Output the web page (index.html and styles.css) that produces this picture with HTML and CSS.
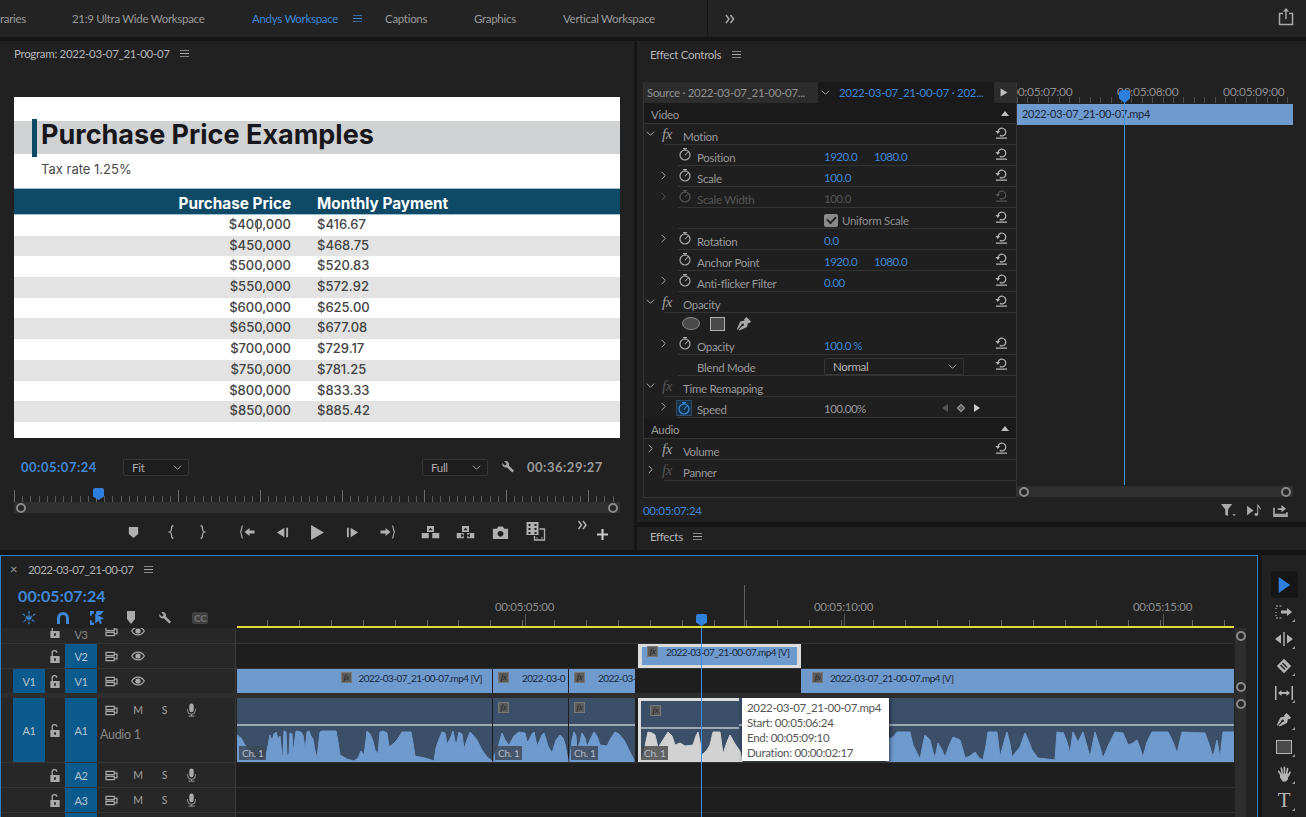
FILE: index.html
```html
<!DOCTYPE html>
<html lang="en">
<head>
  <meta charset="UTF-8" />
  <meta name="viewport" content="width=device-width, initial-scale=1.0"/>
  <title>Andys Workspace</title>
  <link rel="stylesheet" href="styles.css">
</head>
<body>
  <!-- icon sprite -->
  <svg class="sprite" xmlns="http://www.w3.org/2000/svg">
    <symbol id="i-menu" viewBox="0 0 10 10"><path d="M0 1h10v1H0zM0 4.500h10v1H0zM0 8h10v1H0z"/></symbol>
    <symbol id="i-down" viewBox="0 0 10 10"><path d="M1 3l4 4 4-4" fill="none" stroke="currentColor" stroke-width="1.100"/></symbol>
    <symbol id="i-right" viewBox="0 0 10 10"><path d="M3 1l4 4-4 4" fill="none" stroke="currentColor" stroke-width="1.100"/></symbol>
    <symbol id="i-reset" viewBox="0 0 14 14"><path d="M3.200 6.500a4.200 4.200 0 1 1 2 3.600" fill="none" stroke="currentColor" stroke-width="1.300"/><path d="M0.500 5.500h5l-2.500 3zM1 12.400h12v1.200H1z"/></symbol>
    <symbol id="i-watch" viewBox="0 0 14 14"><circle cx="7" cy="8" r="5" fill="none" stroke="currentColor" stroke-width="1.200"/><path d="M5 1h4v1.200H5zM6.500 2h1v2h-1zM6.600 8l3-3.200.6.500L7.400 8.600z"/></symbol>
    <symbol id="i-lock" viewBox="0 0 12 14"><path d="M1 6.500h10V14H1zM5 9v2.500h2V9z" fill-rule="evenodd"/><path d="M3 6.500V3.500a2.500 2.500 0 0 1 5-.5" fill="none" stroke="currentColor" stroke-width="1.400"/></symbol>
    <symbol id="i-output" viewBox="0 0 14 12"><path d="M1 1.500h9v3.500H1zM1 7h9v3.500H1zM10 3.500h3v5h-3" fill="none" stroke="currentColor" stroke-width="1.300"/></symbol>
    <symbol id="i-eye" viewBox="0 0 14 10"><path d="M.7 5c3-5.200 9.600-5.200 12.600 0-3 5.200-9.600 5.200-12.600 0z" fill="none" stroke="currentColor" stroke-width="1.200"/><circle cx="7" cy="5" r="2.600"/></symbol>
    <symbol id="i-mic" viewBox="0 0 12 16"><rect x="3.500" y="0.500" width="5" height="10" rx="2.500"/><path d="M1.500 7v1.500a4.500 4.500 0 0 0 9 0V7M6 13v1.800M2.500 15h7" fill="none" stroke="currentColor" stroke-width="1"/></symbol>
    <symbol id="i-marker" viewBox="0 0 12 14"><path d="M1 1h10v7.500L6 13 1 8.500z"/></symbol>
    <symbol id="i-in" viewBox="0 0 8 16"><path d="M6 1.500C4 1.500 4 3 4 5c0 2-.5 2.500-2 3 1.500.500 2 1 2 3 0 2 0 3.500 2 3.500" fill="none" stroke="currentColor" stroke-width="1.200"/></symbol>
    <symbol id="i-out" viewBox="0 0 8 16"><path d="M2 1.500C4 1.500 4 3 4 5c0 2 .5 2.500 2 3-1.500.500-2 1-2 3 0 2 0 3.500-2 3.500" fill="none" stroke="currentColor" stroke-width="1.200"/></symbol>
    <symbol id="i-goin" viewBox="0 0 16 16"><path d="M3 1.500C2 3 2.500 6 1 8c1.500 2 1 5 2 6.500" fill="none" stroke="currentColor" stroke-width="1.100"/><path d="M5 8l5-4v2.500h5v3h-5V12z"/></symbol>
    <symbol id="i-goout" viewBox="0 0 16 16"><path d="M13 1.500c1 1.500.500 4.500 2 6.500-1.500 2-1 5-2 6.500" fill="none" stroke="currentColor" stroke-width="1.100"/><path d="M11 8L6 4v2.500H1v3h5V12z"/></symbol>
    <symbol id="i-stepb" viewBox="0 0 14 14"><path d="M9 2v10L1 7zM11 2h2v10h-2z"/></symbol>
    <symbol id="i-stepf" viewBox="0 0 14 14"><path d="M5 2v10l8-5zM1 2h2v10H1z"/></symbol>
    <symbol id="i-play" viewBox="0 0 14 14"><path d="M1 0l12 7-12 7z"/></symbol>
    <symbol id="i-lift" viewBox="0 0 20 16"><path d="M6 1h8v7H6zM10 3L7.500 6h5zM0 9h8v6H0zM12 9h8v6h-8z" fill-rule="evenodd"/></symbol>
    <symbol id="i-extract" viewBox="0 0 20 16"><path d="M6 1h8v7H6zM10 3L7.500 6h5zM0 9h8v6H0zM12 9h8v6h-8zM8 12l-3-2.500v5zM12 12l3-2.500v5z" fill-rule="evenodd"/></symbol>
    <symbol id="i-camera" viewBox="0 0 14 12"><path d="M0 2.500h3.500L5 .5h4l1.500 2H14V12H0zM7 4.500a2.700 2.700 0 1 0 .01 0z" fill-rule="evenodd"/></symbol>
    <symbol id="i-compare" viewBox="0 0 20 20"><path d="M1 1h12v13H1z M3 3v2h2V3z M3 7v2h2V7z M3 11v2h2v-2z M9 3v2h2V3z M9 7v2h2V7z M9 11v2h2v-2z" fill-rule="evenodd"/><path d="M14 8h5v11H9v-4M11 17h1M16 17h1" fill="none" stroke="currentColor" stroke-width="1.300"/></symbol>
    <symbol id="i-dbl" viewBox="0 0 10 10"><path d="M1 1l3 4-3 4M5.500 1l3 4-3 4" fill="none" stroke="currentColor" stroke-width="1.500"/></symbol>
    <symbol id="i-plus" viewBox="0 0 10 10"><path d="M4 0h2v4h4v2H6v4H4V6H0V4h4z"/></symbol>
    <symbol id="i-wrench" viewBox="0 0 16 16"><path d="M1.500 3.500l3 3 2.200-2-3-3c2.500-1.200 5.500.5 5.500 3.200 0 .6-.1 1-.3 1.500l6 6.200-2 2-6.200-6c-3 1-5.800-1.700-5.200-4.900z"/></symbol>
    <symbol id="i-share" viewBox="0 0 16 18"><path d="M5 5.500H1.500v11h13v-11H11" fill="none" stroke="currentColor" stroke-width="1.500"/><path d="M7.300 3h1.400v8H7.300zM8 0l3 3.500H5z"/></symbol>
    <symbol id="i-filter" viewBox="0 0 16 14"><path d="M0 0h12L7.500 6v7l-3-1.500V6zM12 11h4l-2 2z"/></symbol>
    <symbol id="i-note" viewBox="0 0 16 14"><path d="M0 2l7 5-7 5z"/><path d="M11.500 11V1.500c1 1.500 3 2 3 4.500" fill="none" stroke="currentColor" stroke-width="1.100"/><ellipse cx="10" cy="11.300" rx="2" ry="1.500"/></symbol>
    <symbol id="i-export" viewBox="0 0 16 14"><path d="M1 4v9h14V9" fill="none" stroke="currentColor" stroke-width="1.800"/><path d="M1 10.500h14v2H1zM5 6V4.500h4V1l5 4-5 4V6.500H5z"/></symbol>
    <symbol id="i-pen" viewBox="0 0 16 16"><path d="M10.500 1l4.500 4.500-2 2-1-.8-1 4.300-7.500 3.500-.8-.8 3.700-3.700a1.300 1.300 0 1 0-1-1L1.700 13.700.9 12.900 4.300 5.500l4.400-1-.7-1z"/></symbol>
    <symbol id="i-arrow" viewBox="0 0 14 18"><path d="M1 0l13 9-13 9z"/></symbol>
    <symbol id="i-track" viewBox="0 0 18 14"><path d="M1 1h7M1 13h7M1 3v1M1 7v1M1 10v1" fill="none" stroke="currentColor" stroke-dasharray="2 1.500" stroke-width="1.200"/><path d="M6 5.500h6V3l5 4-5 4V8.500H6z"/></symbol>
    <symbol id="i-ripple" viewBox="0 0 18 14"><path d="M8.300 0h1.400v14H8.300zM0 7l6-4.500v9zM18 7l-6-4.500v9z"/></symbol>
    <symbol id="i-razor" viewBox="0 0 16 16"><path d="M8 .8L15.200 8 8 15.200.8 8zM5 6.500l-1 1 4.500 4.500 1-1zM7 4.500l-1 1 4.500 4.500 1-1z" fill-rule="evenodd"/></symbol>
    <symbol id="i-slip" viewBox="0 0 18 14"><path d="M0 0h1.500v14H0zM16.500 0H18v14h-1.500zM3 7l3.500-3v2h5V4L15 7l-3.500 3V8h-5v2z"/></symbol>
    <symbol id="i-hand" viewBox="0 0 16 18"><path d="M4 9L2 6M6 8L5 2.500M8.500 8V1.500M11 8.500L12 3M13 11l1.800-4" fill="none" stroke="currentColor" stroke-width="1.900" stroke-linecap="round"/><path d="M3.500 8.500h9.800l-1 6.500-2 2.500H6.500L3.500 13z"/></symbol>
    <symbol id="i-snap" viewBox="0 0 16 16"><path d="M8 0v16M1 3.500l14 9M15 3.500L1 12.500M4 8h8" fill="none" stroke="currentColor" stroke-width="1.300" stroke-dasharray="3 1"/></symbol>
    <symbol id="i-magnet" viewBox="0 0 14 14"><path d="M2.500 13V7a4.500 4.500 0 0 1 9 0v6" fill="none" stroke="currentColor" stroke-width="3"/></symbol>
    <symbol id="i-linked" viewBox="0 0 16 16"><path d="M0 0h4.500v3H2v2.500H0zM0 10.500h2V13h2.500v3H0zM7 0l9 0-4 4.500-5 0zM6 3l10 5.500-4 1.500 1.500 4-2 1L10 11l-4 3z"/></symbol>
    <symbol id="i-hmarker" viewBox="0 0 12 14"><path d="M2 0h8v8l-4 5-4-5z"/></symbol>
  </svg>

  <!-- workspace bar -->
  <header class="topbar">
    <span class="tab tab-cut">raries</span>
    <span class="tab">21:9 Ultra Wide Workspace</span>
    <span class="tab tab-active">Andys Workspace <svg class="ico menu-ico"><use href="#i-menu"/></svg></span>
    <span class="tab">Captions</span>
    <span class="tab">Graphics</span>
    <span class="tab tab-last">Vertical Workspace</span>
    <span class="tab-more"><svg class="ico dbl-ico"><use href="#i-dbl"/></svg></span>
    <span class="top-share"><svg class="ico share-ico"><use href="#i-share"/></svg></span>
  </header>

  <div class="upper">
    <!-- program monitor -->
    <section class="program">
      <div class="panel-title">Program: 2022-03-07_21-00-07 <svg class="ico menu-ico"><use href="#i-menu"/></svg></div>
      <div class="slide">
        <div class="slide-band">
          <span class="slide-accent"></span>
          <h1>Purchase Price Examples</h1>
        </div>
        <p class="slide-sub">Tax rate 1.25%</p>
        <div class="slide-row slide-head"><span>Purchase Price</span><span>Monthly Payment</span></div>
        <div class="slide-row"><span>$400,000</span><span>$416.67</span><i class="ibeam"></i></div>
        <div class="slide-row alt"><span>$450,000</span><span>$468.75</span></div>
        <div class="slide-row"><span>$500,000</span><span>$520.83</span></div>
        <div class="slide-row alt"><span>$550,000</span><span>$572.92</span></div>
        <div class="slide-row"><span>$600,000</span><span>$625.00</span></div>
        <div class="slide-row alt"><span>$650,000</span><span>$677.08</span></div>
        <div class="slide-row"><span>$700,000</span><span>$729.17</span></div>
        <div class="slide-row alt"><span>$750,000</span><span>$781.25</span></div>
        <div class="slide-row"><span>$800,000</span><span>$833.33</span></div>
        <div class="slide-row alt"><span>$850,000</span><span>$885.42</span></div>
      </div>

      <div class="mon-controls">
        <span class="mon-tc">00:05:07:24</span>
        <span class="drop drop-fit">Fit <svg class="ico chev-ico"><use href="#i-down"/></svg></span>
        <span class="drop drop-full">Full <svg class="ico chev-ico"><use href="#i-down"/></svg></span>
        <svg class="ico wrench-ico"><use href="#i-wrench"/></svg>
        <span class="mon-dur">00:36:29:27</span>
      </div>

      <div class="mon-ruler"><span class="mon-head"></span></div>
      <div class="scrollbar"><span class="knob"></span><span class="knob"></span></div>

      <div class="transport">
        <svg class="ico t-btn t-small"><use href="#i-marker"/></svg>
        <svg class="ico t-btn t-gap3"><use href="#i-in"/></svg>
        <svg class="ico t-btn t-neg4"><use href="#i-out"/></svg>
        <svg class="ico t-btn t-gap10"><use href="#i-goin"/></svg>
        <svg class="ico t-btn t-small"><use href="#i-stepb"/></svg>
        <svg class="ico t-btn t-play"><use href="#i-play"/></svg>
        <svg class="ico t-btn t-small"><use href="#i-stepf"/></svg>
        <svg class="ico t-btn"><use href="#i-goout"/></svg>
        <svg class="ico t-btn t-gap8 t-wide"><use href="#i-lift"/></svg>
        <svg class="ico t-btn t-wide"><use href="#i-extract"/></svg>
        <svg class="ico t-btn t-small"><use href="#i-camera"/></svg>
        <svg class="ico t-btn t-tall"><use href="#i-compare"/></svg>
        <svg class="ico t-btn t-gap12 t-more"><use href="#i-dbl"/></svg>
        <svg class="ico t-btn t-neg15 t-plus"><use href="#i-plus"/></svg>
      </div>
    </section>

    <div class="right-col">
      <!-- effect controls -->
      <section class="effects-panel">
        <div class="panel-title">Effect Controls <svg class="ico menu-ico"><use href="#i-menu"/></svg></div>
        <div class="ec-body">
          <div class="ec-list">
            <div class="ec-tabs">
              <span class="ec-source">Source · 2022-03-07_21-00-07...</span>
              <span class="ec-seq"><svg class="ico chev-ico"><use href="#i-down"/></svg><b>2022-03-07_21-00-07 · 202...</b></span>
              <svg class="ico ec-play"><use href="#i-play"/></svg>
            </div>

            <div class="ec-section">Video <i class="tri-up"></i></div>

            <div class="ec-row ec-head"><svg class="ico tw"><use href="#i-down"/></svg><em class="fx">fx</em><span class="name">Motion</span><svg class="ico reset"><use href="#i-reset"/></svg></div>
            <div class="ec-row"><span></span><svg class="ico watch"><use href="#i-watch"/></svg><span class="name">Position</span><span class="val">1920.0</span><span class="val">1080.0</span><svg class="ico reset"><use href="#i-reset"/></svg></div>
            <div class="ec-row"><svg class="ico tw tw-in"><use href="#i-right"/></svg><svg class="ico watch"><use href="#i-watch"/></svg><span class="name">Scale</span><span class="val">100.0</span><span></span><svg class="ico reset"><use href="#i-reset"/></svg></div>
            <div class="ec-row off"><svg class="ico tw tw-in"><use href="#i-right"/></svg><svg class="ico watch"><use href="#i-watch"/></svg><span class="name">Scale Width</span><span class="val">100.0</span><span></span><svg class="ico reset"><use href="#i-reset"/></svg></div>
            <div class="ec-row"><span></span><span></span><span></span><span class="uniform"><i class="check"></i>Uniform Scale</span><svg class="ico reset"><use href="#i-reset"/></svg></div>
            <div class="ec-row"><svg class="ico tw tw-in"><use href="#i-right"/></svg><svg class="ico watch"><use href="#i-watch"/></svg><span class="name">Rotation</span><span class="val">0.0</span><span></span><svg class="ico reset"><use href="#i-reset"/></svg></div>
            <div class="ec-row"><span></span><svg class="ico watch"><use href="#i-watch"/></svg><span class="name">Anchor Point</span><span class="val">1920.0</span><span class="val">1080.0</span><svg class="ico reset"><use href="#i-reset"/></svg></div>
            <div class="ec-row"><svg class="ico tw tw-in"><use href="#i-right"/></svg><svg class="ico watch"><use href="#i-watch"/></svg><span class="name">Anti-flicker Filter</span><span class="val">0.00</span><span></span><svg class="ico reset"><use href="#i-reset"/></svg></div>

            <div class="ec-row ec-head"><svg class="ico tw"><use href="#i-down"/></svg><em class="fx">fx</em><span class="name">Opacity</span><svg class="ico reset"><use href="#i-reset"/></svg></div>
            <div class="ec-row ec-masks"><i class="mask-oval"></i><i class="mask-rect"></i><svg class="ico mask-pen"><use href="#i-pen"/></svg></div>
            <div class="ec-row"><svg class="ico tw tw-in"><use href="#i-right"/></svg><svg class="ico watch"><use href="#i-watch"/></svg><span class="name">Opacity</span><span class="val val-wide">100.0 %</span><svg class="ico reset"><use href="#i-reset"/></svg></div>
            <div class="ec-row"><span></span><span></span><span class="name">Blend Mode</span><span class="drop drop-blend">Normal <svg class="ico chev-ico"><use href="#i-down"/></svg></span><svg class="ico reset"><use href="#i-reset"/></svg></div>

            <div class="ec-row ec-head"><svg class="ico tw"><use href="#i-down"/></svg><em class="fx fx-off">fx</em><span class="name">Time Remapping</span><span></span></div>
            <div class="ec-row"><svg class="ico tw tw-in"><use href="#i-right"/></svg><span class="speed-box"><svg class="ico watch"><use href="#i-watch"/></svg></span><span class="name">Speed</span><span class="speed-val">100.00%</span><span class="keys"><i class="key-l"></i><i class="key-d"></i><i class="key-r"></i></span><span></span></div>

            <div class="ec-section">Audio <i class="tri-up"></i></div>

            <div class="ec-row ec-head"><svg class="ico tw"><use href="#i-right"/></svg><em class="fx">fx</em><span class="name">Volume</span><svg class="ico reset"><use href="#i-reset"/></svg></div>
            <div class="ec-row ec-head"><svg class="ico tw"><use href="#i-right"/></svg><em class="fx fx-off">fx</em><span class="name">Panner</span><span></span></div>
          </div>

          <div class="ec-time">
            <div class="ec-ruler"><span>00:05:07:00</span><span>00:05:08:00</span><span>00:05:09:00</span></div>
            <div class="ec-clip">2022-03-07_21-00-07.mp4</div>
            <div class="scrollbar ec-scroll"><span class="knob"></span><span class="knob"></span></div>
            <i class="ec-playline"></i>
            <i class="ec-playhead"></i>
          </div>
        </div>
        <div class="ec-foot">
          <span class="ec-tc">00:05:07:24</span>
          <span class="ec-foot-icons">
            <svg class="ico"><use href="#i-filter"/></svg>
            <svg class="ico"><use href="#i-note"/></svg>
            <svg class="ico"><use href="#i-export"/></svg>
          </span>
        </div>
      </section>

      <section class="effects-tab">
        <div class="panel-title">Effects <svg class="ico menu-ico"><use href="#i-menu"/></svg></div>
      </section>
    </div>
  </div>

  <div class="lower">
    <!-- timeline -->
    <section class="timeline">
      <div class="tl-top">
        <div class="tl-head">
          <div class="tl-title"><span class="tl-x">×</span>2022-03-07_21-00-07 <svg class="ico menu-ico"><use href="#i-menu"/></svg></div>
          <div class="tl-tc">00:05:07:24</div>
          <div class="tl-tools">
            <svg class="ico on"><use href="#i-snap"/></svg>
            <svg class="ico on"><use href="#i-magnet"/></svg>
            <svg class="ico on"><use href="#i-linked"/></svg>
            <svg class="ico"><use href="#i-hmarker"/></svg>
            <svg class="ico"><use href="#i-wrench"/></svg>
            <span class="cc">CC</span>
          </div>
        </div>
        <div class="tl-ruler">
          <span class="tl-label">00:05:05:00</span>
          <span class="tl-label">00:05:10:00</span>
          <span class="tl-label">00:05:15:00</span>
          <i class="hover-tick"></i>
          <i class="work-area"></i>
        </div>
      </div>

      <div class="tl-body">
        <div class="tl-tracks">
          <div class="track track-v3">
            <div class="t-head">
              <span></span><span></span><svg class="ico lock"><use href="#i-lock"/></svg><span class="sel off">V3</span><svg class="ico out"><use href="#i-output"/></svg><svg class="ico eye"><use href="#i-eye"/></svg>
            </div>
            <div class="lane"></div>
          </div>
          <div class="track track-v">
            <div class="t-head">
              <span></span><span></span><svg class="ico lock"><use href="#i-lock"/></svg><span class="sel">V2</span><svg class="ico out"><use href="#i-output"/></svg><svg class="ico eye"><use href="#i-eye"/></svg>
            </div>
            <div class="lane">
              <div class="clip clip-gap-v2 clip-picked"><em class="fxb">fx</em>2022-03-07_21-00-07.mp4 [V]</div>
            </div>
          </div>
          <div class="track track-v track-v1">
            <div class="t-head">
              <span></span><span class="src">V1</span><svg class="ico lock"><use href="#i-lock"/></svg><span class="sel">V1</span><svg class="ico out"><use href="#i-output"/></svg><svg class="ico eye"><use href="#i-eye"/></svg>
            </div>
            <div class="lane">
              <div class="clip c1"><em class="fxb">fx</em>2022-03-07_21-00-07.mp4 [V]</div>
              <div class="clip c2"><em class="fxb">fx</em>2022-03-0</div>
              <div class="clip c3"><em class="fxb">fx</em>2022-03-</div>
              <div class="clip c4"><em class="fxb">fx</em>2022-03-07_21-00-07.mp4 [V]</div>
            </div>
          </div>
          <div class="track-gap"></div>
          <div class="track track-a1">
            <div class="t-head">
              <span></span><span class="src">A1</span><svg class="ico lock"><use href="#i-lock"/></svg><span class="sel">A1</span><svg class="ico out"><use href="#i-output"/></svg><span class="btn-m">M</span><span class="btn-s">S</span><svg class="ico mic"><use href="#i-mic"/></svg>
              <span class="track-name">Audio 1</span>
            </div>
            <div class="lane lane-audio">
              <div class="aclip c1"><em class="fxb fxb-none"></em><span class="ch">Ch. 1</span></div>
              <div class="aclip c2"><em class="fxb">fx</em><span class="ch">Ch. 1</span></div>
              <div class="aclip c3"><em class="fxb">fx</em><span class="ch">Ch. 1</span></div>
              <div class="aclip c5"><em class="fxb">fx</em><span class="ch">Ch. 1</span></div>
              <div class="aclip c6"></div>
              <svg class="wave" viewBox="0 0 997 36" preserveAspectRatio="none">
                <polygon class="wave-blue" points="0,36 0,9 4,12 8,19 14,26 20,33 27,34 30,25 33,9 35,15 37,8 39,6 41,13 43,10 45,30 46,29 47,5 49,6 50,30 52,28 53,7 55,8 56,28 59,5 64,6 66,9 68,24 70,6 72,5 74,10 76,13 78,25 80,32 83,6 85,5 99,5 101,16 103,29 110,33 117,35 121,32 124,25 127,29 129,14 130,5 133,8 136,15 138,24 141,28 143,6 146,5 150,7 152,21 156,18 160,14 165,6 174,6 176,17 178,30 188,32 197,35 199,22 201,16 205,6 208,7 210,18 213,13 216,5 219,20 222,6 225,8 227,23 230,14 233,6 236,9 240,14 245,24 250,31 255,35 255,36"/>
                <polygon class="wave-blue" points="257,36 257,30 262,18 265,7 268,14 272,19 277,10 282,6 288,7 290,16 292,14 295,8 297,6 300,20 302,16 305,9 307,7 311,20 315,27 319,14 323,9 326,12 328,18 331,34 331,36"/>
                <polygon class="wave-blue" points="333,36 333,30 335,14 337,6 339,10 340,25 343,16 345,7 348,12 350,21 353,14 357,6 360,10 363,19 370,20 374,12 378,6 382,8 387,14 392,24 397,34 397,36"/>
                <polygon class="wave-white" points="403,36 406,30 411,6 415,7 418,9 421,22 426,14 431,6 435,10 438,19 443,17 448,20 456,19 459,10 461,6 463,16 465,29 470,24 473,19 476,6 483,6 486,28 490,16 493,9 498,18 503,25 505,34 505,36"/>
                <polygon class="wave-blue" points="650,36 650,14 656,11 660,6 668,6 673,6 676,19 680,27 683,33 686,18 688,9 693,14 696,26 698,32 701,17 705,24 708,31 712,20 716,11 723,14 726,24 728,32 733,30 738,26 742,32 746,34 749,20 751,6 760,6 763,31 767,16 770,6 773,18 775,31 779,26 783,21 788,7 792,16 795,24 801,32 810,33 818,34 820,6 825,7 826,6 830,16 833,27 836,6 841,16 846,6 850,20 853,31 858,6 862,18 866,32 872,18 878,6 886,7 889,14 891,19 896,17 900,14 903,22 906,31 910,16 915,6 931,6 936,16 940,27 945,6 968,7 972,18 976,31 980,14 983,32 986,6 997,6 997,36"/>
              </svg>
              <div class="tooltip">2022-03-07_21-00-07.mp4<br>Start: 00:05:06:24<br>End: 00:05:09:10<br>Duration: 00:00:02:17</div>
            </div>
          </div>
          <div class="track track-a">
            <div class="t-head">
              <span></span><span></span><svg class="ico lock"><use href="#i-lock"/></svg><span class="sel">A2</span><svg class="ico out"><use href="#i-output"/></svg><span class="btn-m">M</span><span class="btn-s">S</span><svg class="ico mic"><use href="#i-mic"/></svg>
            </div>
            <div class="lane"></div>
          </div>
          <div class="track track-a">
            <div class="t-head">
              <span></span><span></span><svg class="ico lock"><use href="#i-lock"/></svg><span class="sel">A3</span><svg class="ico out"><use href="#i-output"/></svg><span class="btn-m">M</span><span class="btn-s">S</span><svg class="ico mic"><use href="#i-mic"/></svg>
            </div>
            <div class="lane"></div>
          </div>
          <div class="track track-a track-a4">
            <div class="t-head"><span></span><span></span><span></span><span class="sel"></span></div>
            <div class="lane"></div>
          </div>
        </div>
        <div class="tl-scroll">
          <span class="knob knob-a"></span>
          <span class="knob knob-b"></span>
          <span class="knob knob-c"></span>
        </div>
        <i class="tl-playline"></i>
      </div>
      <i class="tl-playhead"></i>
    </section>

    <!-- tools -->
    <aside class="tools">
      <span class="tool tool-on"><svg class="ico"><use href="#i-arrow"/></svg></span>
      <span class="tool tool-more"><svg class="ico"><use href="#i-track"/></svg></span>
      <span class="tool tool-more"><svg class="ico"><use href="#i-ripple"/></svg></span>
      <span class="tool tool-more"><svg class="ico"><use href="#i-razor"/></svg></span>
      <span class="tool tool-more"><svg class="ico"><use href="#i-slip"/></svg></span>
      <span class="tool tool-more"><svg class="ico"><use href="#i-pen"/></svg></span>
      <span class="tool tool-more"><i class="tool-rect"></i></span>
      <span class="tool tool-more"><svg class="ico"><use href="#i-hand"/></svg></span>
      <span class="tool tool-more tool-type">T</span>
    </aside>
  </div>
</body>
</html>
```

FILE: styles.css
```css
* {
  box-sizing: border-box;
}

html, body {
  margin: 0;
  height: 100%;
}

body {
  width: 1306px;
  height: 817px;
  overflow: hidden;
  background: #151515;
  font-family: 'Lato', 'Open Sans', sans-serif;
  font-size: 11.5px;
  letter-spacing: -0.3px;
  color: #a9a9a9;
}

.sprite {
  display: none;
}

.ico {
  display: block;
  width: 14px;
  height: 14px;
  fill: currentColor;
  color: #a9a9a9;
  flex: none;
}

.menu-ico {
  display: inline-block;
  width: 9px;
  height: 9px;
  margin-left: 8px;
}

.chev-ico {
  width: 9px;
  height: 9px;
}

/* workspace bar */
.topbar {
  display: grid;
  grid-template-columns: 72px 180px 133px 89px 89px 145px 22px 1fr;
  align-items: center;
  height: 37px;
  background: #232323;
  margin-bottom: 4px;
}

.tab {
  white-space: nowrap;
  color: #9a9a9a;
}

.tab-active {
  color: #3f87d4;
}

.tab-active .ico {
  color: #3f87d4;
  margin-left: 12px;
}

.tab-last {
  border-right: 1px solid #171717;
  height: 37px;
  line-height: 37px;
}

.dbl-ico {
  width: 10px;
  height: 10px;
}

.tab-more {
  grid-column: 7 / 8;
  margin-left: 17px;
}

.top-share {
  display: flex;
  justify-content: flex-end;
  padding-right: 12px;
}

.share-ico {
  width: 16px;
  height: 18px;
  margin-bottom: 4px;
}

.upper {
  display: flex;
  gap: 3px;
  height: 509px;
}

.panel-title {
  color: #b5b5b5;
  white-space: nowrap;
}

/* program monitor */
.program {
  width: 634px;
  background: #212121;
  padding: 6px 14px 0;
}

.program .panel-title {
  height: 50px;
}

.slide {
  height: 341px;
  background: #fff;
  padding-top: 24px;
  font-family: 'Inter', sans-serif;
  letter-spacing: 0;
  color: #444;
  overflow: hidden;
}

.slide-band {
  position: relative;
  height: 33px;
  background: #d1d2d4;
  padding-left: 27px;
}

.slide-accent {
  position: absolute;
  left: 18px;
  top: -2px;
  width: 5px;
  height: 38px;
  background: #0e4a66;
}

.slide-band h1 {
  margin: 0;
  font-size: 27px;
  line-height: 28px;
  font-weight: 700;
  color: #17171b;
  letter-spacing: 0;
}

.slide-sub {
  margin: 0;
  height: 34px;
  padding: 7px 0 0 27px;
  font-size: 13px;
  line-height: 16px;
  color: #4a4a4a;
}

.slide-row {
  position: relative;
  display: grid;
  grid-template-columns: 277px 1fr;
  column-gap: 26px;
  height: 20.7px;
  font-size: 13px;
  font-weight: 500;
  line-height: 19px;
}

.slide-row span:first-child {
  text-align: right;
}

.slide-row.alt {
  background: #e3e3e3;
}

.slide-head {
  height: 27px;
  background: #0e4a66;
  border-top: 1px solid #9fc0cf;
  border-bottom: 1px solid #9fc0cf;
  color: #fff;
  font-size: 15.3px;
  font-weight: 700;
  line-height: 29px;
}

.ibeam {
  position: absolute;
  left: 243px;
  top: 4px;
  width: 1px;
  height: 13px;
  background: #555;
}

.mon-controls {
  display: flex;
  align-items: center;
  height: 16px;
  margin-top: 21px;
}

.mon-tc {
  width: 109px;
  padding-left: 7px;
  color: #3f87d4;
  font-size: 13px;
  font-weight: 700;
  letter-spacing: 0.5px;
}

.drop {
  display: flex;
  align-items: center;
  justify-content: space-between;
  height: 17px;
  padding: 0 6px 0 8px;
  border: 1px solid #363636;
  border-radius: 2px;
  background: #1e1e1e;
  color: #aaa;
}

.drop-fit {
  width: 66px;
}

.drop-full {
  width: 66px;
  margin-left: 233px;
}

.wrench-ico {
  margin-left: 13px;
  color: #aaa;
}

.mon-dur {
  margin-left: 12px;
  font-size: 13px;
  font-weight: 700;
  letter-spacing: 0.5px;
  color: #999;
}

.mon-ruler {
  position: relative;
  height: 12px;
  margin-top: 15px;
  background:
    repeating-linear-gradient(90deg, #6a6a6a 0 1px, transparent 1px 82px) 0 0 / 100% 100% no-repeat,
    repeating-linear-gradient(90deg, #5a5a5a 0 1px, transparent 1px 8.2px) 0 6px / 100% 6px no-repeat;
}

.mon-head {
  position: absolute;
  left: 79px;
  top: -2px;
  width: 11px;
  height: 12px;
  background: #2f80de;
  clip-path: polygon(0 0, 100% 0, 100% 70%, 50% 100%, 0 70%);
  border-radius: 2px 2px 0 0;
}

.scrollbar {
  display: flex;
  justify-content: space-between;
  align-items: center;
  height: 11px;
  background: #2f2f2f;
  padding: 0 2px;
}

.knob {
  display: block;
  width: 10px;
  height: 10px;
  border: 2.5px solid #8a8a8a;
  border-radius: 50%;
  background: #262626;
}

.transport {
  display: flex;
  align-items: center;
  height: 38px;
  padding-left: 102px;
}

.t-btn {
  width: 35px;
  height: 16px;
  color: #b0b0b0;
}

.t-small {
  height: 13px;
}

.t-play {
  height: 15px;
}

.t-wide {
  height: 14px;
}

.t-tall {
  height: 20px;
  margin-top: -2px;
}

.t-gap3 { margin-left: 3px; }
.t-neg4 { margin-left: -4px; }
.t-gap10 { margin-left: 10px; }
.t-gap8 { margin-left: 8px; }
.t-gap12 { margin-left: 12px; }
.t-neg15 { margin-left: -15px; }

.t-more {
  height: 10px;
  margin-top: -14px;
}

.t-plus {
  height: 11px;
  margin-top: 4px;
  color: #c8c8c8;
}

/* effect controls */
.right-col {
  display: flex;
  flex-direction: column;
  gap: 5px;
  flex: 1;
}

.effects-panel {
  height: 481px;
  background: #212121;
  padding: 7px 13px 0 6px;
}

.effects-panel .panel-title {
  height: 34px;
  padding-left: 7px;
}

.ec-body {
  display: flex;
  height: 416px;
}

.ec-list {
  width: 374px;
  border: 1px solid #333;
  border-top: 0;
  background: #1f1f1f;
  color: #989898;
}

.ec-tabs {
  display: flex;
  align-items: center;
  height: 21px;
  background: #2c2c2c;
}

.ec-source {
  width: 174px;
  padding-left: 3px;
  color: #919191;
  white-space: nowrap;
  overflow: hidden;
}

.ec-seq {
  display: flex;
  align-items: center;
  gap: 9px;
  width: 176px;
  height: 21px;
  padding-left: 3px;
  background: #1a1a1a;
}

.ec-seq b {
  font-weight: 400;
  color: #3f87d4;
  white-space: nowrap;
}

.ec-play {
  width: 8px;
  height: 9px;
  margin-left: 6px;
  color: #c0c0c0;
}

.ec-section {
  display: flex;
  align-items: center;
  justify-content: space-between;
  height: 21px;
  padding: 3px 7px 0 7px;
  background: #1a1a1a;
  border-bottom: 1px solid #333;
  color: #999;
}

.tri-up {
  width: 0;
  height: 0;
  margin-bottom: 3px;
  border-left: 4px solid transparent;
  border-right: 4px solid transparent;
  border-bottom: 5px solid #c0c0c0;
}

.ec-row {
  display: grid;
  grid-template-columns: 26px 27px 127px 50px 1fr 28px;
  align-items: center;
  height: 21px;
  background: linear-gradient(#333, #333) 34px 100% / 100% 1px no-repeat;
}

.ec-head {
  grid-template-columns: 13px 26px 1fr 28px;
  background-position: 20px 100%;
}

.tw {
  width: 9px;
  height: 9px;
  margin-left: 2px;
  margin-top: -2px;
}

.tw-in {
  margin-left: 15px;
}

.fx {
  font-family: 'Liberation Serif', serif;
  font-size: 15px;
  color: #a0a0a0;
  padding-left: 5px;
}

.fx-off {
  color: #555;
}

.name {
  padding-top: 3px;
  white-space: nowrap;
}

.val, .speed-val {
  padding-top: 1px;
  color: #3f87d4;
  white-space: nowrap;
  letter-spacing: -0.5px;
}

.speed-val {
  color: #999;
}

.val-wide {
  grid-column: 4 / 6;
}

.watch {
  width: 14px;
  height: 14px;
  margin: -3px 0 0 8px;
}

.reset {
  width: 13px;
  height: 13px;
  margin: -4px 0 0 7px;
  color: #b5b5b5;
}

.off, .off .ico, .off .val {
  color: #565656;
}

.uniform {
  grid-column: 4 / 6;
  display: flex;
  align-items: center;
  gap: 4px;
  margin-top: 3px;
  color: #8e8e8e;
  white-space: nowrap;
}

.check {
  position: relative;
  display: block;
  width: 14px;
  height: 13px;
  border-radius: 2px;
  background: #8a8a8a;
}

.check::after {
  content: "";
  position: absolute;
  left: 3px;
  top: 2px;
  width: 7px;
  height: 4px;
  border-left: 2px solid #262626;
  border-bottom: 2px solid #262626;
  transform: rotate(-45deg);
}

.ec-masks {
  display: flex;
  gap: 10px;
  padding-left: 38px;
  background: none;
}

.mask-oval {
  width: 18px;
  height: 13px;
  border: 1px solid #8a8a8a;
  border-radius: 50%;
  background: #4a4a4a;
}

.mask-rect {
  width: 15px;
  height: 14px;
  border: 1px solid #b0b0b0;
  background: #4a4a4a;
}

.mask-pen {
  width: 16px;
  height: 16px;
  margin-left: 1px;
}

.drop-blend {
  grid-column: 4 / 6;
  width: 140px;
  height: 17px;
  margin-top: 1px;
  color: #b4b4b4;
}

.speed-box {
  display: block;
  width: 16px;
  height: 16px;
  margin-left: 6px;
  border: 1px solid #2b4a66;
  background: #15324a;
}

.speed-box .watch {
  margin: 0;
  color: #3f87d4;
}

.keys {
  display: flex;
  align-items: center;
  gap: 10px;
  padding-left: 68px;
}

.key-l, .key-r {
  width: 0;
  height: 0;
  border-top: 4.500px solid transparent;
  border-bottom: 4.500px solid transparent;
}

.key-l {
  border-right: 6px solid #555;
}

.key-r {
  border-left: 6px solid #c8c8c8;
}

.key-d {
  width: 6px;
  height: 6px;
  border: 1px solid #999;
  background: #5a5a5a;
  transform: rotate(45deg);
}

.ec-time {
  position: relative;
  width: 276px;
  height: 415px;
}

.ec-ruler {
  display: flex;
  height: 21px;
  margin-bottom: 1px;
  padding-top: 2px;
  overflow: hidden;
  color: #8e8e8e;
  font-size: 12px;
  white-space: nowrap;
  background: repeating-linear-gradient(90deg, #4c4c4c 0 1px, transparent 1px 10.400px) 0 15px / 100% 6px no-repeat;
}

.ec-ruler span {
  flex: none;
  width: 106px;
}

.ec-ruler span:first-child {
  margin-left: -6px;
}

.ec-clip {
  height: 21px;
  padding-left: 5px;
  line-height: 20px;
  background: #6f9ace;
  color: #16263a;
  font-size: 11px;
}

.ec-scroll {
  position: absolute;
  left: 0;
  right: 0;
  bottom: 0;
}

.ec-playline {
  position: absolute;
  left: 107px;
  top: 20px;
  bottom: 12px;
  width: 1px;
  background: #4b92e0;
}

.ec-playhead {
  position: absolute;
  left: 102px;
  top: 8px;
  width: 11px;
  height: 13px;
  background: #2f80de;
  clip-path: polygon(0 0, 100% 0, 100% 65%, 50% 100%, 0 65%);
  border-radius: 4px;
}

.ec-foot {
  display: flex;
  justify-content: space-between;
  align-items: center;
  height: 24px;
}

.ec-tc {
  color: #3f87d4;
}

.ec-foot-icons {
  display: flex;
  gap: 11px;
  margin-right: 5px;
}

.ec-foot-icons .ico {
  width: 15px;
  height: 13px;
}

.effects-tab {
  height: 23px;
  background: #212121;
  padding: 3px 0 0 13px;
}

/* timeline */
.lower {
  display: flex;
  gap: 4px;
  margin-top: 5px;
  height: 262px;
}

.timeline {
  position: relative;
  width: 1258px;
  height: 262px;
  overflow: hidden;
  background: #212121;
  border: 1px solid #2f7fc4;
  border-bottom: 0;
}

.tl-top {
  display: flex;
  height: 72px;
}

.tl-head {
  width: 235px;
}

.tl-title {
  display: flex;
  align-items: center;
  height: 26px;
  padding-left: 9px;
  color: #b0b0b0;
  letter-spacing: -0.55px;
  white-space: nowrap;
}

.tl-title .menu-ico {
  margin-left: 11px;
}

.tl-x {
  width: 18px;
  color: #999;
  font-size: 13px;
}

.tl-tc {
  height: 25px;
  padding-left: 17px;
  line-height: 28px;
  color: #3f87d4;
  font-size: 16px;
  font-weight: 700;
  letter-spacing: 0.1px;
}

.tl-tools {
  display: flex;
  align-items: center;
  gap: 20px;
  height: 21px;
  padding-left: 21px;
}

.tl-tools .on {
  color: #3f87d4;
}

.cc {
  padding: 0 2px;
  border-radius: 2px;
  background: #3f3f3f;
  color: #6f6f6f;
  font-size: 10px;
  font-weight: 900;
  line-height: 12px;
}

.tl-ruler {
  position: relative;
  display: flex;
  width: 997px;
  margin-left: 1px;
  padding-left: 128px;
  background: repeating-linear-gradient(90deg, transparent 0 30px, #666 30px 31px, transparent 31px 31.900px) 0 100% / 100% 8px no-repeat;
}

.tl-label {
  position: relative;
  flex: none;
  width: 319px;
  padding-top: 44px;
  text-align: center;
  color: #8e8e8e;
  font-size: 11.500px;
  letter-spacing: -0.25px;
}

.tl-label::after {
  content: "";
  position: absolute;
  left: 160px;
  top: 58px;
  width: 1px;
  height: 14px;
  background: #5a5a5a;
}

.hover-tick {
  position: absolute;
  left: 507px;
  top: 29px;
  width: 1px;
  height: 41px;
  background: #5e5e5e;
}

.work-area {
  position: absolute;
  left: 0;
  right: 0;
  bottom: 0;
  height: 2px;
  background: #e3df3a;
}

.tl-body {
  position: relative;
  display: flex;
}

.tl-tracks {
  width: 1233px;
}

.track {
  display: flex;
  overflow: hidden;
  border-bottom: 1px solid #343434;
}

.track-v3 {
  height: 16px;
  align-items: flex-end;
}

.track-v {
  height: 25px;
}

.track-v1 {
  height: 24px;
  border-bottom: 0;
}

.track-a1 {
  height: 65px;
}

.track-a {
  height: 25px;
}

.track-a4 {
  border-bottom: 0;
}

.track-gap {
  width: 1245px;
  height: 5px;
  background: #2d2d2d;
}

.t-head {
  display: grid;
  flex: none;
  grid-template-columns: 12px 32px 20px 32px 28px 26px 27px 27px;
  align-items: center;
  justify-items: center;
  width: 235px;
  height: 24px;
  background: #272727;
  border-right: 1px solid #3a3a3a;
}

.src, .sel {
  display: flex;
  align-items: center;
  justify-content: center;
  width: 100%;
  height: 100%;
  background: #0b5a8e;
  color: #b8c4cf;
  font-size: 11px;
}

.sel.off {
  padding-top: 6px;
  background: none;
  color: #888;
}

.lock {
  width: 12px;
  height: 13px;
}

.out {
  width: 13px;
  height: 11px;
}

.eye {
  width: 14px;
  height: 10px;
}

.mic {
  width: 11px;
  height: 14px;
}

.btn-m, .btn-s {
  color: #a2a2a2;
  font-size: 10.500px;
}

.track-a1 .t-head {
  grid-template-rows: 24px 25px 1fr;
  height: 64px;
}

.track-a1 .t-head > :nth-child(-n+4) {
  grid-row: 1 / 4;
}

.track-name {
  grid-row: 2;
  grid-column: 5 / 9;
  justify-self: start;
  padding-left: 3px;
  color: #868686;
  font-size: 12.500px;
}

.lane {
  position: relative;
  display: flex;
  width: 998px;
  margin-left: 1px;
  background: #1e1e1e;
}

.clip {
  display: flex;
  align-items: flex-start;
  height: 24px;
  padding-top: 3px;
  background: #6f9ace;
  color: #18283c;
  font-size: 10px;
  letter-spacing: -0.55px;
  white-space: nowrap;
  overflow: hidden;
}

.fxb {
  display: block;
  flex: none;
  width: 11px;
  height: 11px;
  margin-right: 7px;
  background: #5c5c5c;
  border: 1px solid #777;
  color: #222;
  font: italic 9px/9px 'Liberation Serif', serif;
  text-align: center;
}

.c1 { width: 255px; justify-content: flex-end; padding-right: 10px; }
.c2 { width: 75px; margin-left: 1px; padding-left: 5px; }
.c3 { width: 66px; margin-left: 1px; padding-left: 5px; }
.c4 { width: 433px; margin-left: 166px; padding-left: 11px; }

.c2 .fxb, .c3 .fxb { margin-right: 13px; }

.clip-gap-v2 {
  width: 163px;
  margin-left: 401px;
  padding: 2px 0 0 5px;
  border: 4px solid #dcdcdc;
  border-width: 0 4px 0 4px;
  box-shadow: inset 0 3px 0 #dcdcdc, inset 0 -3px 0 #dcdcdc;
}

.clip-gap-v2 .fxb {
  margin-right: 8px;
}

.lane-audio {
  height: 64px;
  overflow: hidden;
}

.aclip {
  position: relative;
  flex: none;
  height: 64px;
  padding: 4px 0 0 5px;
  background:
    linear-gradient(#9aa7b5, #9aa7b5) 0 26px / 100% 2px no-repeat,
    #3b4f69;
}

.fxb-none {
  visibility: hidden;
}

.aclip.c1 { width: 255px; padding: 0; }
.aclip.c2, .aclip.c3 { margin-left: 1px; }
.c5 {
  width: 104px;
  margin-left: 3px;
  padding: 4px 0 0 9px;
  border: 3px solid #dcdcdc;
  border-right: 0;
  border-bottom-width: 2px;
}
.c6 {
  width: 495px;
  margin-left: -3px;
}

.ch {
  position: absolute;
  z-index: 2;
  left: 2px;
  bottom: 2px;
  padding: 1px 3px;
  background: rgba(60, 70, 85, 0.8);
  color: #b4bcc6;
  font-size: 10px;
}

.c5 .ch {
  background: rgba(70, 70, 70, 0.8);
  left: 0;
  bottom: 0;
}

.wave {
  position: absolute;
  z-index: 1;
  left: 0;
  bottom: 0;
  width: 997px;
  height: 36px;
}

.wave-blue {
  fill: #6f9ace;
  stroke: #6f9ace;
  stroke-width: 1;
}

.wave-white {
  fill: #d2d2d2;
  stroke: #d2d2d2;
  stroke-width: 1;
}

.tooltip {
  position: absolute;
  z-index: 3;
  left: 505px;
  top: 0;
  width: 147px;
  height: 63px;
  padding: 2px 0 0 5px;
  background: #fff;
  color: #555;
  font-size: 11.500px;
  line-height: 15px;
  white-space: nowrap;
  box-shadow: 1px 1px 4px rgba(0, 0, 0, 0.6);
}

.tl-scroll {
  display: flex;
  flex-direction: column;
  align-items: center;
  width: 11px;
  margin-left: 1px;
  background: #2d2d2d;
}

.knob-a { margin-top: 3px; }
.knob-b { margin-top: 41px; }
.knob-c { margin-top: 7px; }

.tl-playline {
  position: absolute;
  left: 700px;
  top: 0;
  bottom: 0;
  width: 1px;
  background: #3d8ef0;
  z-index: 4;
}

.tl-playhead {
  position: absolute;
  left: 695px;
  top: 58px;
  width: 11px;
  height: 12px;
  background: #2f80de;
  border-radius: 2px 2px 0 0;
  clip-path: polygon(0 0, 100% 0, 100% 70%, 50% 100%, 0 70%);
}

/* tools */
.tools {
  display: flex;
  flex-direction: column;
  align-items: center;
  flex: 1;
  padding-top: 16px;
  background: #212121;
}

.tool {
  position: relative;
  display: flex;
  align-items: center;
  justify-content: center;
  width: 27px;
  height: 27px;
  flex: none;
}

.tool .ico {
  width: 18px;
  height: 16px;
  color: #b4b4b4;
}

.tool-on {
  background: #161616;
  border-radius: 3px;
}

.tool-on .ico {
  width: 14px;
  height: 16px;
  color: #2f80de;
}

.tool-more::after {
  content: "";
  position: absolute;
  right: 3px;
  bottom: 3px;
  border-left: 3px solid transparent;
  border-bottom: 3px solid #999;
}

.tool-rect {
  width: 16px;
  height: 14px;
  background: #4a4a4a;
  border: 1px solid #b4b4b4;
}

.tool-type {
  color: #b4b4b4;
  font-family: 'Liberation Serif', serif;
  font-size: 21px;
}
```
